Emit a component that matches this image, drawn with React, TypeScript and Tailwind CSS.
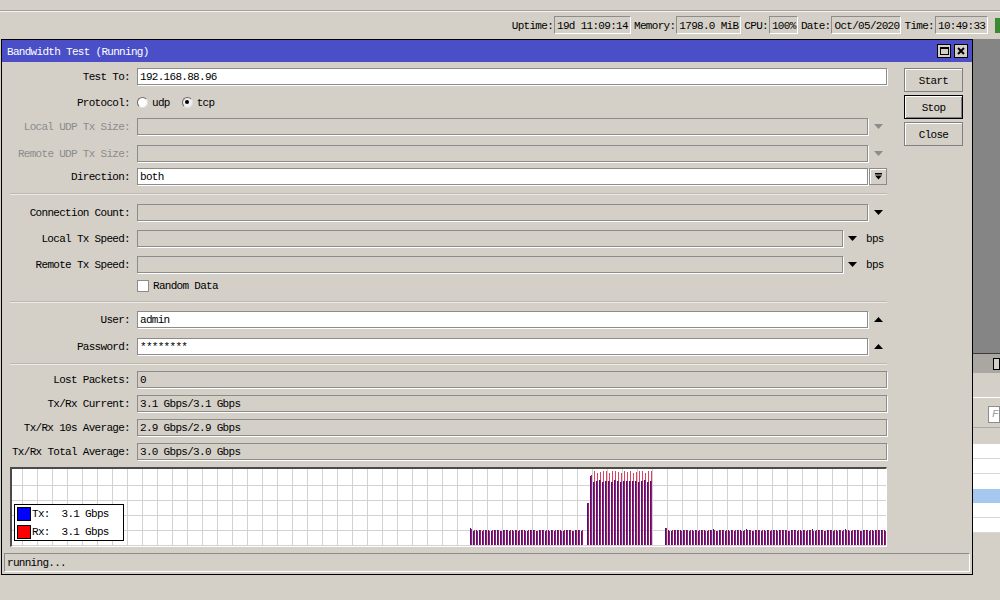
import React from "react";

type Bar = { x: number; b: number; r: number };

// graph samples in page coordinates (top of blue / red line)
const bars: Bar[] = [];
for (let x = 470, i = 0; x <= 581; x += 3, i++) {
  bars.push({ x, b: i === 0 ? 528 : 530 + (i % 3 === 1 ? 1 : 0), r: i === 0 ? 529 : 530 + (i % 4 === 2 ? 1 : 0) });
}
bars.push({ x: 587, b: 503, r: 503 });
bars.push({ x: 590, b: 476, r: 475 });
for (let x = 593, i = 0; x <= 651; x += 3, i++) {
  bars.push({ x, b: 481 + (i % 3 === 0 ? 1 : 0) - (i % 5 === 2 ? 1 : 0), r: 471 + (i % 4 === 1 ? 2 : i % 3 === 2 ? 1 : 0) });
}
for (let x = 665, i = 0; x <= 884; x += 3, i++) {
  bars.push({ x, b: i === 0 ? 528 : 530 + (i % 3 === 2 ? 1 : 0) - (i % 11 === 5 ? 1 : 0), r: i === 0 ? 528 : 530 + (i % 4 === 1 ? 1 : 0) });
}

const field = "h-[17px] border border-[#8c8c8c] shadow-[1px_1px_0_#ffffff] pl-[2px] pt-[2px] flex items-center whitespace-pre";

function Tri({ up, color = "#000" }: { up?: boolean; color?: string }) {
  return (
    <svg width="9" height="5" viewBox="0 0 9 5">
      {up ? <polygon points="0,5 9,5 4.5,0" fill={color} /> : <polygon points="0,0 9,0 4.5,5" fill={color} />}
    </svg>
  );
}

function Row({ label, className, gray, children }: { label: string; className: string; gray?: boolean; children: React.ReactNode }) {
  return (
    <div className={`flex items-center ${className}`}>
      <div className={`w-[128px] shrink-0 pt-[2px] text-right whitespace-nowrap ${gray ? "text-[#8c8c8c]" : "text-black"}`}>{label}</div>
      <div className="ml-[7px] flex items-center">{children}</div>
    </div>
  );
}

function ArrowSlot({ up, gray }: { up?: boolean; gray?: boolean }) {
  return (
    <div className="w-[19px] shrink-0 flex justify-center pl-[1px]">
      <Tri up={up} color={gray ? "#8c8c8c" : "#000"} />
    </div>
  );
}

function Graph() {
  const ox = 12;
  const oy = 469;
  return (
    <div className="mt-[7px] ml-[8px] w-[877px] h-[80px] border-t-2 border-l-2 border-t-[#4a4a4a] border-l-[#4a4a4a] border-b border-r border-b-white border-r-white bg-white relative">
      <svg width="874" height="77" viewBox="0 0 874 77" className="block">
        {Array.from({ length: 59 }, (_, k) => (
          <line key={"v" + k} x1={10.5 + 15 * k} x2={10.5 + 15 * k} y1={0} y2={77} stroke="#d2d2d2" />
        ))}
        {[16, 31, 46, 61, 76].map((y) => (
          <line key={"h" + y} x1={0} x2={874} y1={y + 0.5} y2={y + 0.5} stroke="#d2d2d2" />
        ))}
        {bars.map((bar, i) => (
          <g key={i}>
            <rect x={bar.x - ox + 1} y={bar.r - oy} width={1} height={76 - (bar.r - oy)} fill="#b01848" />
            <rect x={bar.x - ox} y={bar.b - oy} width={1} height={76 - (bar.b - oy)} fill="#40149a" />
            {bar.r < bar.b - 3 && <rect x={bar.x - ox + 1} y={bar.r - oy} width={1} height={bar.b - bar.r} fill="#e0405e" />}
          </g>
        ))}
      </svg>
      <div className="absolute left-[2px] top-[35px] w-[110px] h-[37px] border border-black bg-white flex flex-col justify-center gap-[4px] pl-[2px]">
        <div className="flex items-center gap-[1px]">
          <div className="w-[14px] h-[14px] border border-black bg-[#0000ff]" />
          <span className="whitespace-pre pt-[2px]">Tx:  3.1 Gbps</span>
        </div>
        <div className="flex items-center gap-[1px]">
          <div className="w-[14px] h-[14px] border border-black bg-[#ff0000]" />
          <span className="whitespace-pre pt-[2px]">Rx:  3.1 Gbps</span>
        </div>
      </div>
    </div>
  );
}

function Btn({ label, focused }: { label: string; focused?: boolean }) {
  return (
    <div
      className={`h-[24px] w-[59px] pt-[2px] flex items-center justify-center bg-[#d4d0c8] border ${
        focused ? "border-black shadow-[inset_1px_1px_0_#ffffff,inset_-1px_-1px_0_#808080]" : "border-[#808080] shadow-[inset_1px_1px_0_#ffffff]"
      }`}
    >
      {label}
    </div>
  );
}

function StatusItem({ label, value, w }: { label: string; value: string; w: string }) {
  return (
    <div className="flex items-center gap-[1px]">
      <span className="pt-[2px]">{label}</span>
      <div className={`h-[18px] ${w} border border-t-[#8c8c8c] border-l-[#8c8c8c] border-b-white border-r-white flex items-center pl-[2px] pt-[2px] whitespace-pre`}>
        {value}
      </div>
    </div>
  );
}

function Separator({ className }: { className: string }) {
  return (
    <div className={`ml-[8px] w-[877px] ${className}`}>
      <div className="h-[1px] bg-[#bdb9b1]" />
      <div className="h-[1px] bg-[#ecebe8]" />
    </div>
  );
}

export default function App() {
  return (
    <div className="relative w-[1000px] h-[600px] overflow-hidden bg-[#d4d0c8] font-['Liberation_Mono','DejaVu_Sans_Mono',monospace] text-[11px] tracking-[-0.7px] leading-none text-black">
      {/* top status bar */}
      <div className="h-[10px]" />
      <div className="h-[1px] bg-[#a4a09a]" />
      <div className="h-[1px] bg-[#f4f3f1]" />
      <div className="h-[26px] flex items-center justify-end gap-[3px]">
        <StatusItem label="Uptime:" value="19d 11:09:14" w="w-[77px]" />
        <StatusItem label="Memory:" value="1798.0 MiB" w="w-[65px]" />
        <StatusItem label="CPU:" value="100%" w="w-[29px]" />
        <StatusItem label="Date:" value="Oct/05/2020" w="w-[70px]" />
        <StatusItem label="Time:" value="10:49:33" w="w-[53px]" />
        <div className="ml-[4px] w-[5px] h-[15px] bg-[#3a8a32]" />
      </div>

      {/* desktop behind */}
      <div className="absolute left-[972px] top-[39px] w-[28px] h-[314px] bg-[#858585]" />
      <div className="absolute left-[972px] top-[353px] w-[28px] flex flex-col">
        <div className="h-[1px] bg-[#3c3c3c]" />
        <div className="h-[19px] bg-[#aaa6a2] flex items-center pl-[21px]">
          <div className="w-[12px] h-[12px] border border-black bg-[#d4d0c8]" />
        </div>
        <div className="h-[24px]" />
        <div className="h-[1px] bg-white" />
        <div className="h-[29px] pl-[16px] pt-[8px]">
          <div className="h-[17px] border border-[#8c8c8c] bg-white pl-[3px] pt-[2px] text-[#9a9a9a] italic">F</div>
        </div>
        <div className="h-[1px] bg-[#a8a8a8]" />
        <div className="h-[16px]" />
        <div className="h-[15px] bg-white border-b border-[#d8d8d8]" />
        <div className="h-[15px] bg-white border-b border-[#d8d8d8]" />
        <div className="h-[15px] bg-white" />
        <div className="h-[14px] bg-[#a6c8f0]" />
        <div className="h-[15px] bg-white border-b border-[#d8d8d8]" />
        <div className="h-[15px] bg-white border-b border-[#d8d8d8]" />
      </div>

      {/* Bandwidth Test window */}
      <div className="absolute left-[1px] top-[39px] w-[972px] h-[536px] border border-black bg-[#d4d0c8] flex flex-col">
        <div className="h-[22px] bg-[#4a4fc8] flex items-center justify-between pl-[5px] pr-[4px]">
          <span className="text-white pt-[2px]">Bandwidth Test (Running)</span>
          <div className="flex gap-[3px]">
            <div className="w-[14px] h-[14px] border border-black bg-[#d4d0c8] flex items-center justify-center">
              <div className="w-[9px] h-[8px] border border-black border-t-2" />
            </div>
            <div className="w-[14px] h-[14px] border border-black bg-[#d4d0c8] flex items-center justify-center">
              <svg width="8" height="8" viewBox="0 0 8 8">
                <path d="M1 1 L7 7 M7 1 L1 7" stroke="#000" strokeWidth="2" />
              </svg>
            </div>
          </div>
        </div>

        <div className="flex-1 flex pt-[6px]">
          <div className="w-[885px] flex flex-col">
            <Row label="Test To:" className="">
              <div className={`${field} w-[750px] bg-white`}>192.168.88.96</div>
            </Row>
            <Row label="Protocol:" className="mt-[9px] h-[16px]">
              <div className="w-[11px] h-[11px] rounded-full bg-white border border-t-[#6a6a6a] border-l-[#6a6a6a] border-b-[#e0e0e0] border-r-[#e0e0e0]" />
              <span className="ml-[4px] pt-[2px]">udp</span>
              <div className="ml-[12px] w-[11px] h-[11px] rounded-full bg-[#eeeeee] border border-t-[#6a6a6a] border-l-[#6a6a6a] border-b-[#e0e0e0] border-r-[#e0e0e0] flex items-center justify-center">
                <div className="w-[4px] h-[4px] rounded-full bg-black" />
              </div>
              <span className="ml-[4px] pt-[2px]">tcp</span>
            </Row>
            <Row label="Local UDP Tx Size:" gray className="mt-[8px]">
              <div className={`${field} w-[731px] bg-[#d4d0c8]`} />
              <ArrowSlot gray />
            </Row>
            <Row label="Remote UDP Tx Size:" gray className="mt-[10px]">
              <div className={`${field} w-[731px] bg-[#d4d0c8]`} />
              <ArrowSlot gray />
            </Row>
            <Row label="Direction:" className="mt-[6px]">
              <div className={`${field} w-[731px] bg-white`}>both</div>
              <div className="ml-[1px] w-[18px] h-[17px] border border-[#8c8c8c] shadow-[inset_1px_1px_0_#ffffff] flex items-center justify-center">
                <svg width="7" height="7" viewBox="0 0 7 7">
                  <rect x="0" y="0" width="7" height="1.5" fill="#000" />
                  <polygon points="0,2.5 7,2.5 3.5,6.5" fill="#000" />
                </svg>
              </div>
            </Row>
            <Separator className="mt-[8px]" />
            <Row label="Connection Count:" className="mt-[9px]">
              <div className={`${field} w-[731px] bg-[#d4d0c8]`} />
              <ArrowSlot />
            </Row>
            <Row label="Local Tx Speed:" className="mt-[9px]">
              <div className={`${field} w-[706px] bg-[#d4d0c8]`} />
              <div className="ml-[5px]">
                <Tri />
              </div>
              <span className="ml-[9px] pt-[2px]">bps</span>
            </Row>
            <Row label="Remote Tx Speed:" className="mt-[9px]">
              <div className={`${field} w-[706px] bg-[#d4d0c8]`} />
              <div className="ml-[5px]">
                <Tri />
              </div>
              <span className="ml-[9px] pt-[2px]">bps</span>
            </Row>
            <div className="mt-[6px] h-[13px] flex items-center pl-[135px]">
              <div className="w-[12px] h-[12px] bg-white border border-[#8c8c8c]" />
              <span className="ml-[4px] pt-[2px]">Random Data</span>
            </div>
            <Separator className="mt-[9px]" />
            <Row label="User:" className="mt-[8px]">
              <div className={`${field} w-[731px] bg-white`}>admin</div>
              <ArrowSlot up />
            </Row>
            <Row label="Password:" className="mt-[10px]">
              <div className={`${field} w-[731px] bg-white`}>********</div>
              <ArrowSlot up />
            </Row>
            <Separator className="mt-[8px]" />
            <Row label="Lost Packets:" className="mt-[6px]">
              <div className={`${field} w-[750px] bg-[#d4d0c8]`}>0</div>
            </Row>
            <Row label="Tx/Rx Current:" className="mt-[7px]">
              <div className={`${field} w-[750px] bg-[#d4d0c8]`}>3.1 Gbps/3.1 Gbps</div>
            </Row>
            <Row label="Tx/Rx 10s Average:" className="mt-[7px]">
              <div className={`${field} w-[750px] bg-[#d4d0c8]`}>2.9 Gbps/2.9 Gbps</div>
            </Row>
            <Row label="Tx/Rx Total Average:" className="mt-[7px]">
              <div className={`${field} w-[750px] bg-[#d4d0c8]`}>3.0 Gbps/3.0 Gbps</div>
            </Row>
            <Graph />
          </div>
          <div className="ml-[17px] flex flex-col gap-[3px]">
            <Btn label="Start" />
            <Btn label="Stop" focused />
            <Btn label="Close" />
          </div>
        </div>

        <div className="mx-[2px] mb-[2px] h-[19px] border border-t-[#8c8c8c] border-l-[#8c8c8c] border-b-white border-r-white flex items-center pl-[2px] pt-[2px]">
          running...
        </div>
      </div>
    </div>
  );
}
